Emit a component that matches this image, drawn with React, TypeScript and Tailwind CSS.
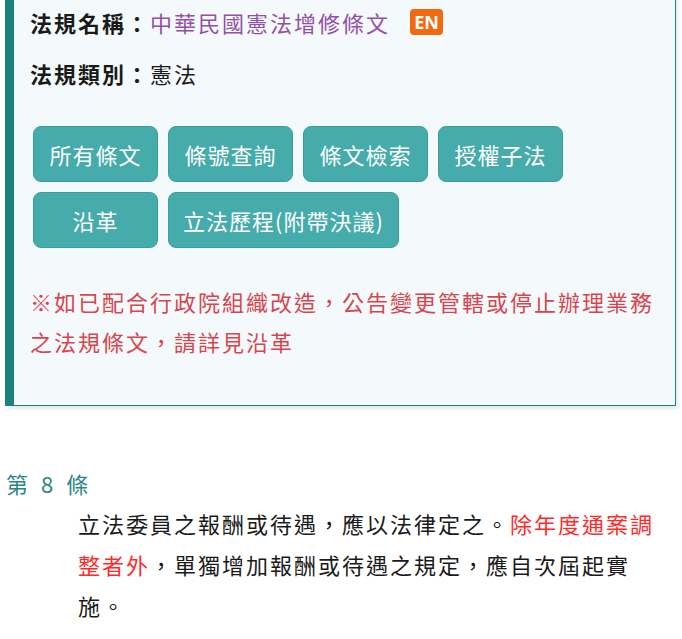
const cjk = "font-['Noto_Sans_CJK_TC','Noto_Sans',sans-serif]";

const buttons = [
  ["所有條文", "條號查詢", "條文檢索", "授權子法"],
  ["沿革", "立法歷程(附帶決議)"],
];

function ActionButton({ label }: { label: string }) {
  return (
    <button className="h-[56px] min-w-[125px] px-[14px] rounded-[8px] bg-[#46abab] border border-[#3b9e9e] text-white text-[22px] tracking-[1px] leading-none">
      {label}
    </button>
  );
}

export default function App() {
  return (
    <div className={`${cjk} w-[682px] min-h-[639px] bg-white text-[#1a1a1a]`}>
      {/* law info panel */}
      <div className="ml-[5px] mr-[6px] -mt-[10px] bg-[#f4fafb] border border-[#1f807c] border-l-[9px] border-l-[#1a817d] pt-[11px] pb-[44px] pl-[16px] pr-[14px] shadow-[2px_3px_3px_rgba(40,120,140,0.14)]">
        <div className="text-[22px] tracking-[2px] leading-[40px] flex items-center">
          <span className="font-bold">法規名稱：</span>
          <span className="text-[#9450a8]">中華民國憲法增修條文</span>
          <span className="ml-[20px] inline-flex items-center justify-center w-[33px] h-[26px] rounded-[4px] bg-[#f26a10] text-white text-[18px] font-bold tracking-normal font-['Open_Sans',sans-serif]">
            EN
          </span>
        </div>
        <div className="mt-[11px] text-[22px] tracking-[2px] leading-[40px]">
          <span className="font-bold">法規類別：</span>
          <span>憲法</span>
        </div>

        <div className="mt-[33px] pl-[3px] flex flex-col gap-[10px]">
          {buttons.map((row, i) => (
            <div key={i} className="flex gap-[10px]">
              {row.map((b) => (
                <ActionButton key={b} label={b} />
              ))}
            </div>
          ))}
        </div>

        <p className="mt-[33px] text-[22px] tracking-[2px] leading-[40px] text-[#d8454f]">
          ※如已配合行政院組織改造，公告變更管轄或停止辦理業務之法規條文，請詳見沿革
        </p>
      </div>

      {/* article */}
      <div className="mt-[57px]">
        <div className="pl-[6px] h-[40px] flex items-center gap-[13px] text-[22px] text-[#2d8585]">
          <span>第</span>
          <span>8</span>
          <span>條</span>
        </div>
        <p className="pl-[78px] pr-[6px] text-[22px] tracking-[2px] leading-[41px] text-[#1a1a1a]">
          立法委員之報酬或待遇，應以法律定之。
          <span className="text-[#ff2a2a]">除年度通案調整者外</span>
          ，單獨增加報酬或待遇之規定，應自次屆起實施。
        </p>
      </div>
    </div>
  );
}
